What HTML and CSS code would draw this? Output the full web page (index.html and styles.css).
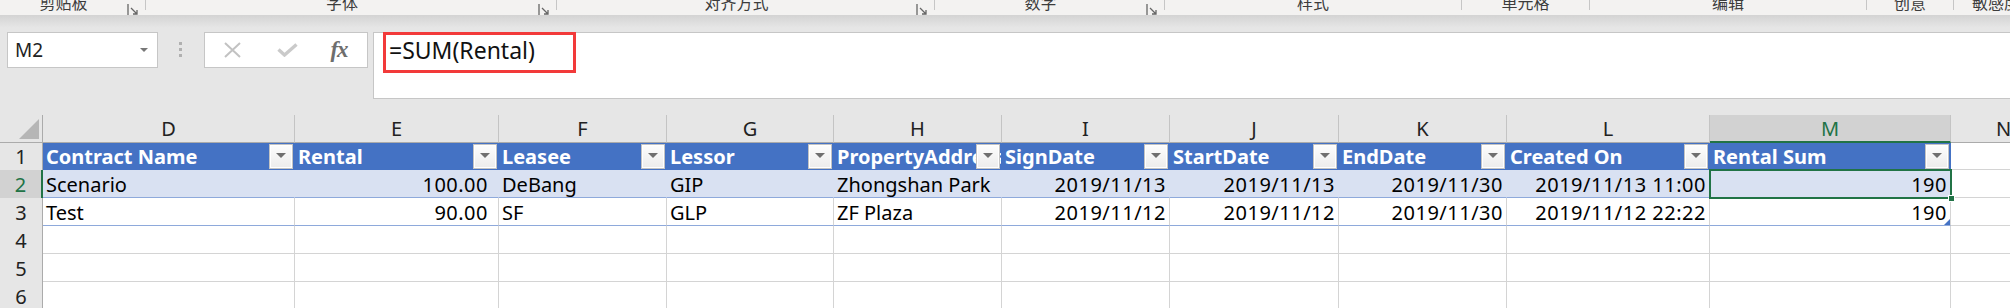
FILE: index.html
```html
<!DOCTYPE html>
<html lang="zh-CN">
  <head>
    <meta charset="UTF-8" />
    <title>Rental Sum</title>
    <link rel="stylesheet" href="styles.css">
  </head>
  <body>
    <div class="ribbon">
      <div class="group g1"><span class="label">剪贴板</span><span class="launcher"><svg width="12" height="12" viewBox="0 0 12 12"><path d="M1 0V11M4 4L10 10M6 10H10V6" fill="none" stroke="#666" stroke-width="1.3"/></svg></span></div>
      <div class="sep"></div>
      <div class="group g2"><span class="label">字体</span><span class="launcher"><svg width="12" height="12" viewBox="0 0 12 12"><path d="M1 0V11M4 4L10 10M6 10H10V6" fill="none" stroke="#666" stroke-width="1.3"/></svg></span></div>
      <div class="sep"></div>
      <div class="group g3"><span class="label">对齐方式</span><span class="launcher"><svg width="12" height="12" viewBox="0 0 12 12"><path d="M1 0V11M4 4L10 10M6 10H10V6" fill="none" stroke="#666" stroke-width="1.3"/></svg></span></div>
      <div class="sep"></div>
      <div class="group g4"><span class="label">数字</span><span class="launcher"><svg width="12" height="12" viewBox="0 0 12 12"><path d="M1 0V11M4 4L10 10M6 10H10V6" fill="none" stroke="#666" stroke-width="1.3"/></svg></span></div>
      <div class="sep"></div>
      <div class="group g5"><span class="label">样式</span></div>
      <div class="sep"></div>
      <div class="group g6"><span class="label">单元格</span></div>
      <div class="sep"></div>
      <div class="group g7"><span class="label">编辑</span></div>
      <div class="sep"></div>
      <div class="group g8"><span class="label">创意</span></div>
      <div class="sep"></div>
      <div class="group g9"><span class="label">敏感度</span></div>
    </div>
    <div class="shade"></div>

    <div class="formula-bar">
      <div class="name-box"><span>M2</span><span class="caret"></span></div>
      <div class="grip"><i></i><i></i><i></i></div>
      <div class="fn-box">
        <span class="fn-icon w56"><svg width="17" height="16" viewBox="0 0 17 16"><path d="M1 1L16 15M16 1L1 15" stroke="#c2c2c2" stroke-width="2"/></svg></span>
        <span class="fn-icon w55"><svg width="21" height="14" viewBox="0 0 21 14"><path d="M1.5 6.5L7.5 12L19.5 1.5" fill="none" stroke="#cacaca" stroke-width="3.4"/></svg></span>
        <span class="fn-icon w48 fx">fx</span>
      </div>
      <div class="formula-input">
        <div class="formula-text">=SUM(Rental)</div>
      </div>
    </div>

    <div class="sheet">
      <div class="corner"><svg width="20" height="20" viewBox="0 0 20 20"><polygon points="20,0 20,20 0,20" fill="#b6b6b6"/></svg></div>
      <div class="col-head">D</div>
      <div class="col-head">E</div>
      <div class="col-head">F</div>
      <div class="col-head">G</div>
      <div class="col-head">H</div>
      <div class="col-head">I</div>
      <div class="col-head">J</div>
      <div class="col-head">K</div>
      <div class="col-head">L</div>
      <div class="col-head sel">M</div>
      <div class="col-head">N</div>

      <div class="row-head r1">1</div>
      <div class="cell th r1">Contract Name<span class="filter"></span></div>
      <div class="cell th r1">Rental<span class="filter"></span></div>
      <div class="cell th r1">Leasee<span class="filter"></span></div>
      <div class="cell th r1">Lessor<span class="filter"></span></div>
      <div class="cell th r1">PropertyAddress<span class="filter"></span></div>
      <div class="cell th r1">SignDate<span class="filter"></span></div>
      <div class="cell th r1">StartDate<span class="filter"></span></div>
      <div class="cell th r1">EndDate<span class="filter"></span></div>
      <div class="cell th r1">Created On<span class="filter"></span></div>
      <div class="cell th r1">Rental Sum<span class="filter"></span></div>
      <div class="cell r1"></div>

      <div class="row-head sel">2</div>
      <div class="cell band">Scenario</div>
      <div class="cell band num pad-fmt">100.00</div>
      <div class="cell band">DeBang</div>
      <div class="cell band">GIP</div>
      <div class="cell band">Zhongshan Park</div>
      <div class="cell band num">2019/11/13</div>
      <div class="cell band num">2019/11/13</div>
      <div class="cell band num">2019/11/30</div>
      <div class="cell band num">2019/11/13 11:00</div>
      <div class="cell band num active">190</div>
      <div class="cell"></div>

      <div class="row-head">3</div>
      <div class="cell last-row">Test</div>
      <div class="cell last-row num pad-fmt">90.00</div>
      <div class="cell last-row">SF</div>
      <div class="cell last-row">GLP</div>
      <div class="cell last-row">ZF Plaza</div>
      <div class="cell last-row num">2019/11/12</div>
      <div class="cell last-row num">2019/11/12</div>
      <div class="cell last-row num">2019/11/30</div>
      <div class="cell last-row num">2019/11/12 22:22</div>
      <div class="cell last-row num table-end">190</div>
      <div class="cell"></div>

      <div class="row-head">4</div>
      <div class="cell"></div><div class="cell"></div><div class="cell"></div><div class="cell"></div>
      <div class="cell"></div><div class="cell"></div><div class="cell"></div><div class="cell"></div>
      <div class="cell"></div><div class="cell"></div><div class="cell"></div>

      <div class="row-head">5</div>
      <div class="cell"></div><div class="cell"></div><div class="cell"></div><div class="cell"></div>
      <div class="cell"></div><div class="cell"></div><div class="cell"></div><div class="cell"></div>
      <div class="cell"></div><div class="cell"></div><div class="cell"></div>

      <div class="row-head">6</div>
      <div class="cell"></div><div class="cell"></div><div class="cell"></div><div class="cell"></div>
      <div class="cell"></div><div class="cell"></div><div class="cell"></div><div class="cell"></div>
      <div class="cell"></div><div class="cell"></div><div class="cell"></div>
    </div>
  </body>
</html>
```

FILE: styles.css
```css
body {
  margin: 0;
  width: 2010px;
  height: 308px;
  overflow: hidden;
  background-color: #e6e6e6;
  font-family: "Noto Sans", "Noto Sans CJK SC", sans-serif;
  color: #000;
}

/* ribbon group captions, cut off at the top */
.ribbon {
  display: flex;
  height: 15px;
  overflow: hidden;
  background-color: #f3f2f1;
  font-family: "Noto Sans CJK SC", sans-serif;
  font-size: 16px;
  color: #3c3c3c;
}

.group {
  display: flex;
  align-items: flex-start;
  flex-shrink: 0;
}

.group .label {
  flex: 1;
  text-align: center;
  line-height: 16px;
  margin-top: -6px;
  white-space: nowrap;
}

.launcher {
  width: 12px;
  margin-right: 6px;
  margin-top: -3px;
}

.sep {
  width: 1px;
  height: 10px;
  background-color: #c6c6c6;
  flex-shrink: 0;
}

.g1 { width: 145px; }
.g2 { width: 410px; }
.g3 { width: 377px; }
.g4 { width: 229px; }
.g5 { width: 296px; }
.g6 { width: 127px; }
.g7 { width: 276px; }
.g8 { width: 86px; }
.g9 { flex: 1; }

.g9 .label {
  text-align: left;
  padding-left: 18px;
}

.shade {
  height: 17px;
  background: linear-gradient(#d3d3d3, #e6e6e6 75%);
}

/* formula bar */
.formula-bar {
  display: flex;
  align-items: flex-start;
  height: 67px;
  margin-bottom: 16px;
}

.name-box {
  display: flex;
  align-items: center;
  box-sizing: border-box;
  width: 151px;
  height: 36px;
  margin-left: 7px;
  padding-left: 7px;
  border: 1px solid #c6c6c6;
  background-color: #fff;
  font-size: 19px;
  color: #222;
}

.caret {
  margin-left: auto;
  margin-right: 9px;
  border-left: 4px solid transparent;
  border-right: 4px solid transparent;
  border-top: 4px solid #777;
}

.grip {
  display: flex;
  flex-direction: column;
  gap: 3px;
  margin: 10px 22px 0 21px;
}

.grip i {
  width: 3px;
  height: 3px;
  background-color: #b0b0b0;
}

.fn-box {
  display: flex;
  align-items: center;
  box-sizing: border-box;
  width: 164px;
  height: 36px;
  border: 1px solid #c6c6c6;
  background-color: #fff;
}

.fn-icon {
  display: flex;
  justify-content: center;
  align-items: center;
}

.w56 { width: 55px; }
.w55 { width: 55px; }
.w48 { width: 48px; }

.fx {
  font-family: "Liberation Serif", serif;
  font-style: italic;
  font-weight: bold;
  font-size: 23px;
  color: #6e6e6e;
  letter-spacing: -1px;
}

.formula-input {
  flex: 1;
  box-sizing: border-box;
  height: 67px;
  margin-left: 5px;
  padding-left: 9px;
  border: 1px solid #c6c6c6;
  border-right: none;
  background-color: #fff;
}

.formula-text {
  display: flex;
  align-items: center;
  box-sizing: border-box;
  width: 193px;
  height: 41px;
  margin-top: -1px;
  padding: 0 0 5px 3px;
  border: 3px solid #f23a3a;
  font-size: 23px;
  color: #111;
}

/* worksheet grid */
.sheet {
  display: grid;
  grid-template-columns: 43px 252px 204px 168px 167px 168px 168px 169px 168px 203px 241px 106px;
  grid-template-rows: 28px 27px repeat(5, 28px);
  font-size: 20px;
}

.corner {
  display: flex;
  justify-content: flex-end;
  align-items: flex-end;
  box-sizing: border-box;
  padding: 0 3px 3px 0;
  border-right: 1px solid #ababab;
  border-bottom: 1px solid #ababab;
}

.col-head {
  box-sizing: border-box;
  padding-top: 3px;
  line-height: 22px;
  text-align: center;
  color: #222;
  border-right: 1px solid #c4c4c4;
  border-bottom: 1px solid #ababab;
}

.col-head.sel {
  background-color: #d2d2d2;
  color: #217346;
  border-bottom: 2px solid #217346;
}

.row-head {
  box-sizing: border-box;
  padding-top: 4px;
  line-height: 22px;
  text-align: center;
  color: #222;
  border-right: 1px solid #ababab;
}

.row-head.sel {
  background-color: #d2d2d2;
  color: #217346;
  border-right: 2px solid #217346;
}

.cell {
  box-sizing: border-box;
  padding: 4px 3px 0 3px;
  line-height: 22px;
  white-space: nowrap;
  overflow: hidden;
  background-color: #fff;
  border-right: 1px solid #d4d4d4;
  border-bottom: 1px solid #d4d4d4;
}

.r1 {
  padding-top: 3px;
}

.th {
  position: relative;
  padding-right: 28px;
  background-color: #4472c4;
  border-color: #4472c4;
  color: #fff;
  font-weight: 700;
}

.filter {
  position: absolute;
  top: 1px;
  right: 1px;
  display: flex;
  justify-content: center;
  align-items: center;
  box-sizing: border-box;
  width: 24px;
  height: 25px;
  border: 1px solid #c3c3c3;
  background: linear-gradient(#fdfdfd, #ececec);
  box-shadow: inset 0 0 0 1px #fff;
}

.filter::after {
  content: "";
  margin-top: -2px;
  border-left: 5px solid transparent;
  border-right: 5px solid transparent;
  border-top: 5px solid #6f6f6f;
}

.band {
  background-color: #d9e1f2;
  border-right-color: #d9e1f2;
  border-bottom-color: #8ea9db;
}

.last-row {
  border-bottom-color: #8ea9db;
}

.num {
  text-align: right;
  letter-spacing: 0.5px;
}

.pad-fmt {
  padding-right: 10px;
}

.active {
  position: relative;
  overflow: visible;
}

.active::before {
  content: "";
  position: absolute;
  top: -1px;
  left: -1px;
  right: -2px;
  bottom: -2px;
  border: 2px solid #217346;
  z-index: 2;
}

.active::after {
  content: "";
  position: absolute;
  right: -5px;
  bottom: -5px;
  width: 5px;
  height: 5px;
  background-color: #217346;
  border: 1px solid #fff;
  z-index: 3;
}

.table-end {
  position: relative;
}

.table-end::after {
  content: "";
  position: absolute;
  right: 0;
  bottom: 0;
  border-left: 6px solid transparent;
  border-bottom: 6px solid #4472c4;
}
```
